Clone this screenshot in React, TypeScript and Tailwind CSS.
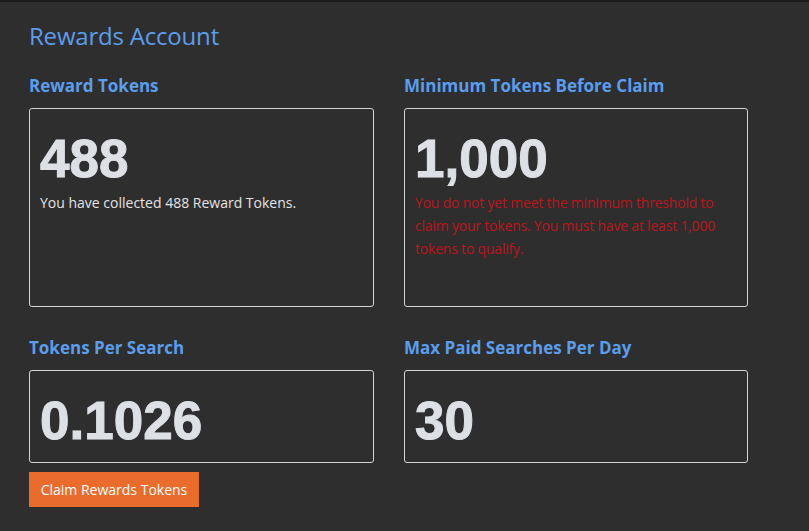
const Stat = ({
  title,
  value,
  tall,
  children,
}: {
  title: string;
  value: string;
  tall?: boolean;
  children?: React.ReactNode;
}) => {
  return (
    <div>
      <h2 className="text-[17px] leading-6 font-bold text-[#5b9ded] mb-[10px]">{title}</h2>
      <div
        className={`border border-[#d4d4d4] rounded-[3px] px-[10px] pt-[23px] pb-4 ${
          tall ? "h-[199px]" : "h-[93px]"
        }`}
      >
        <div className="font-['Liberation_Sans',Arial,sans-serif] font-bold text-[53px] leading-none text-[#dde0e5] [-webkit-text-stroke:1px_#dde0e5]">
          {value}
        </div>
        {children}
      </div>
    </div>
  );
};

export default function App() {
  return (
    <div className="min-h-[531px] bg-[#2e2e2e] border-t-2 border-[#1c1c1c] pl-[29px] pt-[18px] font-['Open_Sans','Lato',sans-serif]">
      <h1 className="text-[24px] leading-8 font-normal text-[#5b9ded] tracking-[-0.2px]">Rewards Account</h1>
      <div className="mt-[22px] grid grid-cols-[345px_344px] gap-x-[30px]">
        <Stat title="Reward Tokens" value="488" tall>
          <p className="mt-[6px] text-[14px] leading-[23px] text-[#e4e4e4]">
            You have collected 488 Reward Tokens.
          </p>
        </Stat>
        <Stat title="Minimum Tokens Before Claim" value="1,000" tall>
          <p className="mt-[6px] text-[14px] leading-[23px] text-[#b8161c] tracking-[-0.2px]">
            You do not yet meet the minimum threshold to claim your tokens. You must have at least 1,000 tokens to
            qualify.
          </p>
        </Stat>
        <div className="mt-[29px]">
          <Stat title="Tokens Per Search" value="0.1026" />
          <button className="mt-[9px] h-[35px] w-[170px] bg-[#e96c2d] text-white text-[14px]">
            Claim Rewards Tokens
          </button>
        </div>
        <div className="mt-[29px]">
          <Stat title="Max Paid Searches Per Day" value="30" />
        </div>
      </div>
    </div>
  );
}
